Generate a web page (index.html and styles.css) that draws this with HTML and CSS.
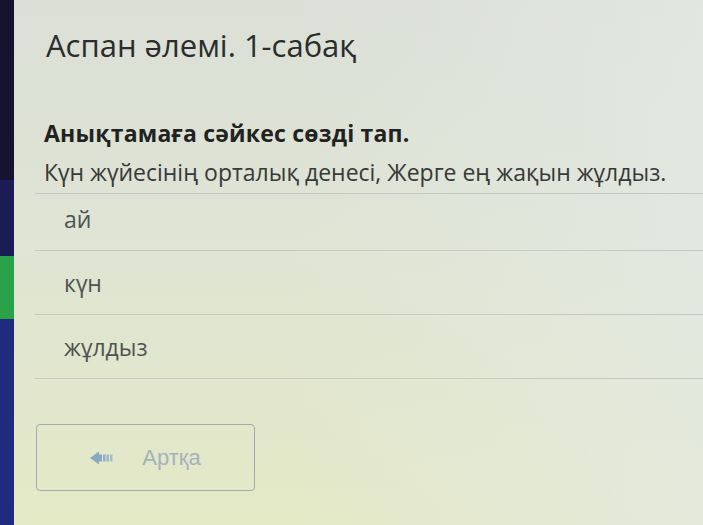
FILE: index.html
```html
<!DOCTYPE html>
<html lang="kk">
<head>
  <meta charset="UTF-8">
  <title>Аспан әлемі. 1-сабақ</title>
  <link rel="stylesheet" href="styles.css">
</head>
<body>
  <div class="screen">
    <aside class="rail">
      <div class="rail-top"></div>
      <div class="rail-mid"></div>
      <div class="rail-active"></div>
      <div class="rail-bottom"></div>
    </aside>
    <main class="lesson">
      <h1 class="lesson-title">Аспан әлемі. 1-сабақ</h1>
      <h2 class="task">Анықтамаға сәйкес сөзді тап.</h2>
      <p class="question">Күн жүйесінің орталық денесі, Жерге ең жақын жұлдыз.</p>
      <ul class="options">
        <li>ай</li>
        <li>күн</li>
        <li>жұлдыз</li>
      </ul>
      <button class="back" type="button" disabled>
        <svg class="back-icon" width="24" height="14" viewBox="0 0 24 14" aria-hidden="true">
          <path d="M0 7 L9 0.5 L9 13.5 Z" fill="#86aac4"/>
          <rect x="9" y="3.5" width="3" height="7" fill="#86aac4"/>
          <rect x="13" y="3.5" width="2.5" height="7" fill="#8eb0c6"/>
          <rect x="16.5" y="3.5" width="2.5" height="7" fill="#97b6c8"/>
          <rect x="20" y="3.5" width="2.5" height="7" fill="#a3bccb"/>
        </svg>
        <span>Артқа</span>
      </button>
    </main>
  </div>
</body>
</html>
```

FILE: styles.css
```css
*,
*::before,
*::after {
  box-sizing: border-box;
}
html, body {
  margin: 0;
  height: 100%;
}
body {
  font-family: 'Open Sans', 'Noto Sans', sans-serif;
  background: #dfe3da;
  overflow: hidden;
}
.screen {
  display: flex;
  height: 525px;
}
.rail {
  width: 14px;
  display: flex;
  flex-direction: column;
  flex-shrink: 0;
}
.rail-top {
  height: 180px;
  background: #16132f;
}
.rail-mid {
  height: 76px;
  background: #1b1b55;
}
.rail-active {
  height: 63px;
  background: #2aa247;
}
.rail-bottom {
  flex: 1;
  background: #1f2b7c;
}
.lesson {
  flex: 1;
  padding: 23px 0 0 30px;
  background:
    linear-gradient(90deg, rgba(228, 233, 228, 0) 40%, rgba(228, 233, 228, 0.7) 100%),
    linear-gradient(180deg, #dbdfd6 0%, #dfe4d4 45%, #e4e9c6 100%);
  color: #2b2e2d;
}
.lesson-title {
  margin: 0 0 0 2px;
  font-size: 31px;
  font-weight: 400;
  line-height: 44px;
  color: #2a2d2c;
}
.task {
  margin: 51px 0 0;
  font-size: 23px;
  font-weight: 700;
  line-height: 30px;
  letter-spacing: 0.2px;
  color: #1f2321;
}
.question {
  margin: 9px 0 0 -9px;
  padding: 0 0 6px 9px;
  font-size: 23px;
  line-height: 30px;
  color: #363a38;
  border-bottom: 1px solid #c3c8c1;
}
.options {
  list-style: none;
  margin: 0 0 0 -9px;
  padding: 0;
}
.options li {
  padding: 17px 0 16px 29px;
  font-size: 23px;
  line-height: 30px;
  color: #4e5351;
  border-bottom: 1px solid #c5cac3;
}
.options li:first-child {
  padding-top: 10px;
}
.back {
  margin: 45px 0 0 -8px;
  width: 219px;
  height: 67px;
  display: flex;
  align-items: center;
  justify-content: center;
  gap: 28px;
  padding: 0;
  background: transparent;
  border: 1px solid #a3abab;
  border-radius: 4px;
  font-family: 'Liberation Sans', Arial, sans-serif;
  font-size: 22px;
  color: #a3b3bb;
}
.back-icon {
  display: block;
}
```
